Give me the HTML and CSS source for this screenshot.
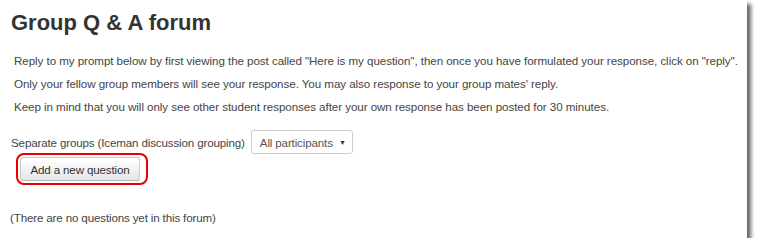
FILE: index.html
```html
<!DOCTYPE html>
<html lang="en">
<head>
  <meta charset="utf-8">
  <title>Group Q &amp; A forum</title>
  <link rel="stylesheet" href="styles.css">
</head>
<body>
  <div class="page">
    <h2 class="forum-title">Group Q &amp; A forum</h2>

    <div class="intro">
      <p>Reply to my prompt below by first viewing the post called "Here is my question", then once you have formulated your response, click on "reply".</p>
      <p>Only your fellow group members will see your response. You may also response to your group mates' reply.</p>
      <p>Keep in mind that you will only see other student responses after your own response has been posted for 30 minutes.</p>
    </div>

    <div class="group-selector">
      <label for="groupSelect">Separate groups (Iceman discussion grouping)</label>
      <div class="select-box" id="groupSelect">
        <span>All participants</span>
        <span class="caret">&#9660;</span>
      </div>
    </div>

    <div class="new-question">
      <button class="btn">Add a new question</button>
    </div>

    <p class="empty">(There are no questions yet in this forum)</p>
  </div>
</body>
</html>
```

FILE: styles.css
```css
body {
  margin: 0;
  background: #fff;
  font-family: "Liberation Sans", Arial, sans-serif;
  color: #333;
}

.page {
  width: 747px;
  height: 238px;
  background: #fff;
  box-shadow: 4px 4px 4px rgba(0, 0, 0, 0.6);
  box-sizing: border-box;
  padding: 8px 0 0 11px;
  font-size: 11.6px;
  letter-spacing: -0.15px;
  color: #444;
}

.forum-title {
  margin: 0;
  font-size: 22px;
  font-weight: bold;
  line-height: 30px;
  letter-spacing: 0;
  color: #333;
}

.intro {
  padding: 11px 0 0 3px;
}

.intro p {
  margin: 0;
  line-height: 23px;
  white-space: nowrap;
  letter-spacing: -0.06px;
}

.group-selector {
  display: flex;
  align-items: center;
  gap: 6px;
  margin-top: 12px;
}

.select-box {
  display: flex;
  align-items: center;
  justify-content: space-between;
  width: 102px;
  height: 24px;
  box-sizing: border-box;
  padding: 0 6px 0 8px;
  border: 1px solid #ccc;
  border-radius: 3px;
  color: #555;
}

.caret {
  font-size: 7px;
  color: #333;
}

.new-question {
  display: inline-block;
  margin: -1px 0 0 5px;
  padding: 2px 6px 2px 2px;
  border: 2px solid #e60000;
  border-radius: 8px;
}

.btn {
  display: block;
  width: 120px;
  height: 24px;
  font-family: inherit;
  font-size: 11.6px;
  letter-spacing: -0.15px;
  color: #333;
  background: linear-gradient(#fff, #e6e6e6);
  border: 1px solid #ccc;
  border-bottom-color: #b3b3b3;
  border-radius: 3px;
}

.empty {
  margin: 26px 0 0 -1px;
}
```
